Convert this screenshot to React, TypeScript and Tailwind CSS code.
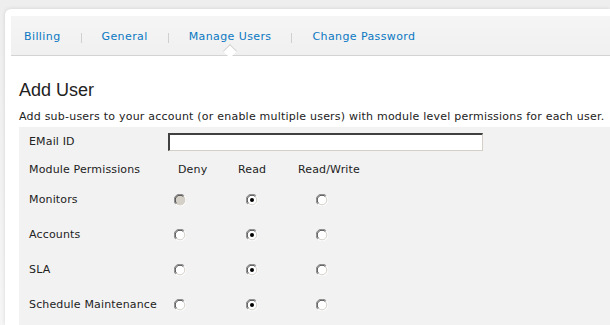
const tabs = ['Billing', 'General', 'Manage Users', 'Change Password'];

const modules = [
  { name: 'Monitors', value: 'read', denyDisabled: true },
  { name: 'Accounts', value: 'read' },
  { name: 'SLA', value: 'read' },
  { name: 'Schedule Maintenance', value: 'read' },
];

// old-style windows radio
const Radio = ({ checked, disabled }: { checked?: boolean; disabled?: boolean }) => (
  <svg width="12" height="12" viewBox="0 0 12 12" className="block">
    <circle cx="6" cy="6" r="5.5" fill={disabled ? '#d4d0c8' : '#ffffff'} />
    <path d="M1.8 10.2 A5.5 5.5 0 0 1 10.2 1.8" fill="none" stroke="#808080" strokeWidth="1" />
    <path d="M2.6 9.4 A4.4 4.4 0 0 1 9.4 2.6" fill="none" stroke="#404040" strokeWidth="1" />
    <path d="M10.2 1.8 A5.5 5.5 0 0 1 1.8 10.2" fill="none" stroke="#ffffff" strokeWidth="1" />
    <path d="M9.4 2.6 A4.4 4.4 0 0 1 2.6 9.4" fill="none" stroke="#d4d0c8" strokeWidth="1" />
    {checked && <circle cx="6" cy="6" r="2" fill="#000000" />}
  </svg>
);

export default function App() {
  return (
    <div
      className="w-[610px] h-[325px] overflow-hidden bg-gradient-to-b from-[#eeeeee] to-[#f6f6f6] pl-[5px] pt-[9px]"
      style={{ fontFamily: '"DejaVu Sans", Verdana, sans-serif' }}
    >
      <div className="h-full bg-white rounded-tl-[6px] shadow-[0_0_4px_rgba(0,0,0,0.12)] pl-[6px] pt-[7px]">
        {/* Tabs */}
        <div className="relative h-[40px] bg-gradient-to-b from-[#f5f5f5] to-[#f0f0f0] border-b border-[#d3d3d3] flex items-center pl-[13px] pt-[4px] text-[11px] tracking-[0.4px] text-[#0a78c2]">
          {tabs.map((t, i) => (
            <div key={t} className="flex items-center">
              {i > 0 && <span className="w-px h-[10px] bg-[#d0d0d0] mx-[20px]" />}
              <span className="relative">
                {t}
                {t === 'Manage Users' && (
                  <span className="absolute left-[36px] top-[17px] w-[10px] h-[10px] bg-white border-l border-t border-[#d3d3d3] rotate-45" />
                )}
              </span>
            </div>
          ))}
        </div>

        <div className="pl-[8px]">
          <h2 className="mt-[25px] text-[18px] leading-[18px] text-[#222222]" style={{ fontFamily: '"Liberation Sans", Arial, sans-serif' }}>
            Add User
          </h2>
          <p className="mt-[11px] text-[11px] leading-[13px] tracking-[0.22px] text-[#222222] whitespace-nowrap">
            Add sub-users to your account (or enable multiple users) with module level permissions for each user.
          </p>

          <div className="mt-[4px] bg-[#f2f2f2] h-[240px] pl-[10px] pt-[6px] text-[11px] tracking-[0.15px] text-[#222222]">
            <div className="flex items-center h-[18px]">
              <span className="w-[139px]">EMail ID</span>
              <div className="w-[315px] h-[18px] bg-white border-t-2 border-l-2 border-t-[#404040] border-l-[#404040] border-b border-r border-b-[#d4d0c8] border-r-[#d4d0c8]" />
            </div>

            <div className="flex items-center h-[18px] mt-[10px]">
              <span className="w-[149px]">Module Permissions</span>
              <span className="w-[60px]">Deny</span>
              <span className="w-[60px]">Read</span>
              <span>Read/Write</span>
            </div>

            {modules.map((m, i) => (
              <div key={m.name} className={`flex items-center h-[18px] ${i === 0 ? 'mt-[12px]' : 'mt-[17px]'}`}>
                <span className="w-[145px]">{m.name}</span>
                <span className="w-[72px]">
                  <Radio disabled={m.denyDisabled} checked={m.value === 'deny'} />
                </span>
                <span className="w-[70px]">
                  <Radio checked={m.value === 'read'} />
                </span>
                <span>
                  <Radio checked={m.value === 'write'} />
                </span>
              </div>
            ))}
          </div>
        </div>
      </div>
    </div>
  );
}
